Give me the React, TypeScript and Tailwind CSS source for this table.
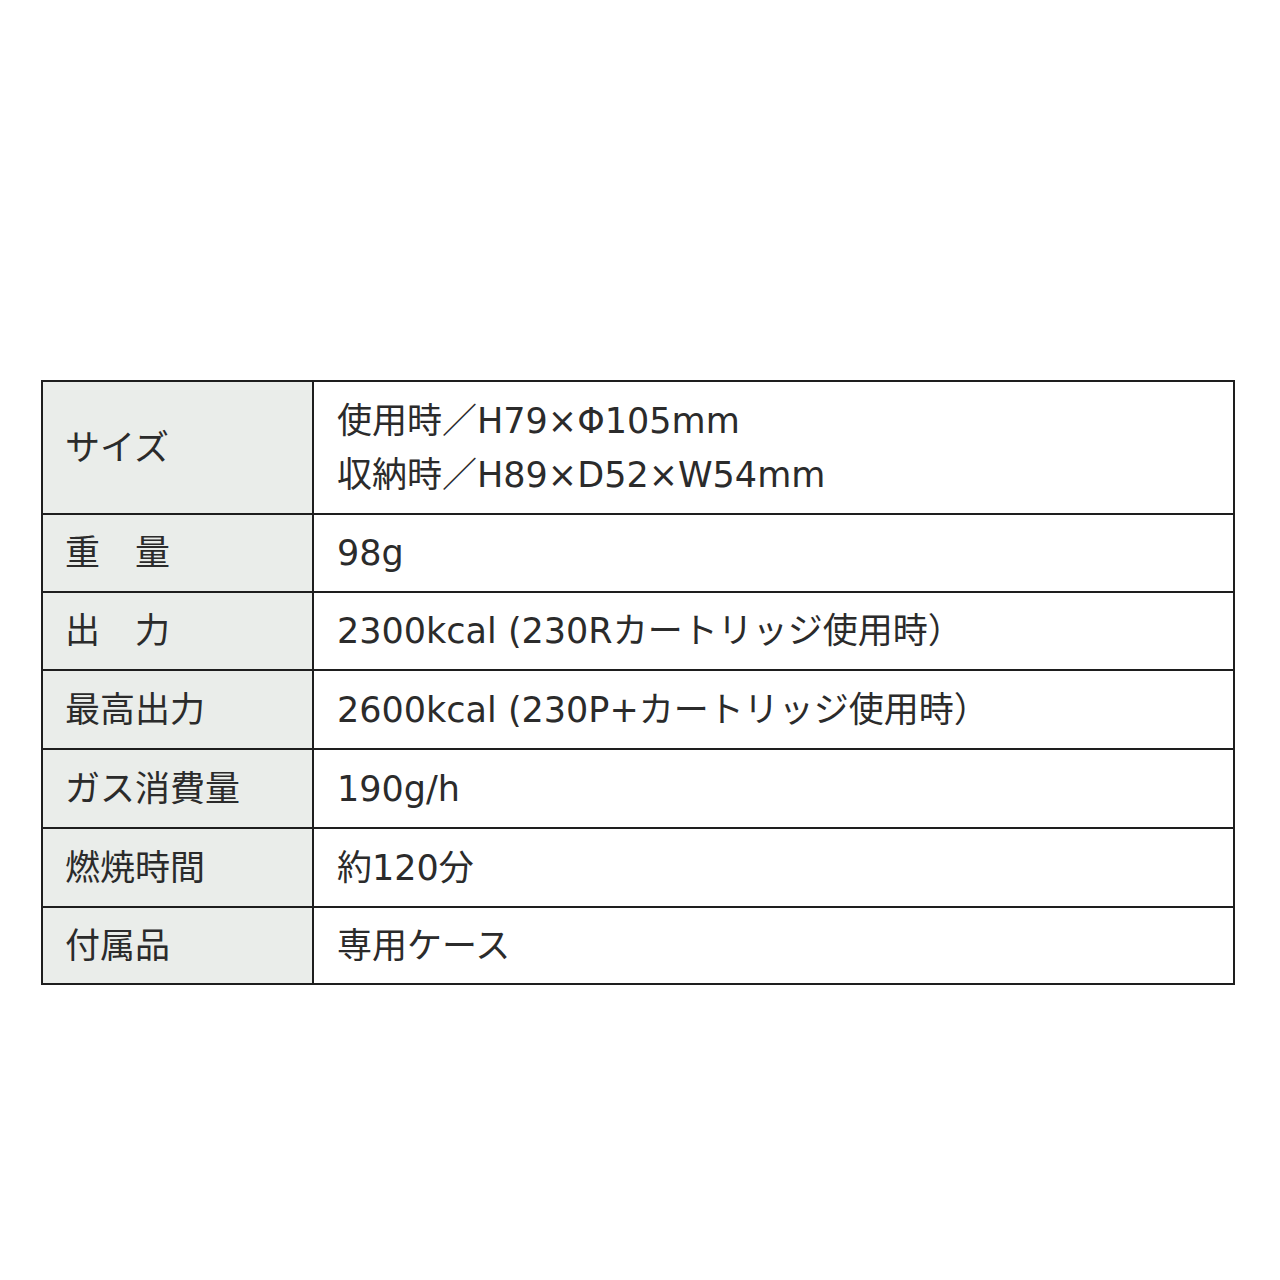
const rows: { label: string; value: string[]; h: string }[] = [
  { label: 'サイズ', value: ['使用時／H79×Φ105mm', '収納時／H89×D52×W54mm'], h: 'h-[131px]' },
  { label: '重　量', value: ['98g'], h: 'h-[78px]' },
  { label: '出　力', value: ['2300kcal (230Rカートリッジ使用時）'], h: 'h-[78px]' },
  { label: '最高出力', value: ['2600kcal (230P+カートリッジ使用時）'], h: 'h-[79px]' },
  { label: 'ガス消費量', value: ['190g/h'], h: 'h-[79px]' },
  { label: '燃焼時間', value: ['約120分'], h: 'h-[79px]' },
  { label: '付属品', value: ['専用ケース'], h: 'h-[77px]' },
]

export default function App() {
  return (
    <main
      className="min-h-[1280px] bg-white pt-[380px] pl-[41px] text-[35px] leading-[54px] text-[#2b2b2b]"
      style={{ fontFamily: '"DejaVu Sans", "Noto Sans CJK JP", sans-serif' }}
    >
      <div className="w-[1194px] border-2 border-[#1e1e1e]">
        {rows.map((r, i) => (
          <div key={r.label} className={`flex ${r.h} ${i > 0 ? 'border-t-2 border-[#1e1e1e]' : ''}`}>
            <div className="flex w-[271px] shrink-0 items-center border-r-2 border-[#1e1e1e] bg-[#eaedea] pl-[22px]">
              {r.label}
            </div>
            <div className="flex flex-1 flex-col justify-center pl-[23px]">
              {r.value.map((v) => (
                <span key={v}>{v}</span>
              ))}
            </div>
          </div>
        ))}
      </div>
    </main>
  )
}
